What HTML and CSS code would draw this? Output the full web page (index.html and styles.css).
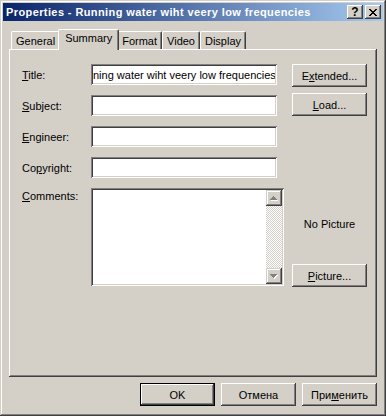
FILE: index.html
```html
<!DOCTYPE html>
<html lang="en">
<head>
    <meta charset="UTF-8">
    <title>Properties</title>
    <link rel="stylesheet" href="styles.css">
</head>
<body>

<div class="window">
    <!-- Caption -->
    <div class="titlebar">
        <span class="title">Properties - Running water wiht veery low frequencies</span>
        <div class="caption-buttons">
            <span class="cap-btn help">?</span>
            <span class="cap-btn close">
                <svg width="8" height="7" viewBox="0 0 8 7" shape-rendering="crispEdges">
                    <path d="M0 0h2v1h-2zM6 0h2v1h-2zM1 1h2v1h-2zM5 1h2v1h-2zM2 2h4v1h-4zM3 3h2v1h-2zM2 4h4v1h-4zM1 5h2v1h-2zM5 5h2v1h-2zM0 6h2v1h-2zM6 6h2v1h-2z" fill="#000"/>
                </svg>
            </span>
        </div>
    </div>

    <div class="content">
        <!-- Tabs -->
        <div class="tabs">
            <div class="tab">General</div>
            <div class="tab active">Summary</div>
            <div class="tab">Format</div>
            <div class="tab">Video</div>
            <div class="tab">Display</div>
        </div>

        <div class="panel">
            <div class="fields">
                <label class="field-label"><u>T</u>itle:</label>
                <input class="edit" type="text" value="ning water wiht veery low frequencies">

                <label class="field-label"><u>S</u>ubject:</label>
                <input class="edit" type="text">

                <label class="field-label"><u>E</u>ngineer:</label>
                <input class="edit" type="text">

                <label class="field-label">Co<u>p</u>yright:</label>
                <input class="edit" type="text">

                <label class="field-label top"><u>C</u>omments:</label>
                <div class="memo">
                    <div class="memo-text"></div>
                    <div class="scrollbar">
                        <div class="scroll-btn">
                            <svg width="8" height="5" viewBox="0 0 8 5" shape-rendering="crispEdges">
                                <path d="M4 1h1v1h-1zM3 2h3v1h-3zM2 3h5v1h-5zM1 4h7v1h-7z" fill="#fff"/>
                                <path d="M3 0h1v1h-1zM2 1h3v1h-3zM1 2h5v1h-5zM0 3h7v1h-7z" fill="#808080"/>
                            </svg>
                        </div>
                        <div class="scroll-track"></div>
                        <div class="scroll-btn">
                            <svg width="8" height="5" viewBox="0 0 8 5" shape-rendering="crispEdges">
                                <path d="M1 1h7v1h-7zM2 2h5v1h-5zM3 3h3v1h-3zM4 4h1v1h-1z" fill="#fff"/>
                                <path d="M0 0h7v1h-7zM1 1h5v1h-5zM2 2h3v1h-3zM3 3h1v1h-1z" fill="#808080"/>
                            </svg>
                        </div>
                    </div>
                </div>
            </div>

            <div class="side">
                <button class="btn">E<u>x</u>tended...</button>
                <button class="btn load"><u>L</u>oad...</button>
                <div class="no-picture">No Picture</div>
                <button class="btn picture"><u>P</u>icture...</button>
            </div>
        </div>

        <!-- Dialog buttons -->
        <div class="actions">
            <button class="btn default">OK</button>
            <button class="btn">Отмена</button>
            <button class="btn">При<u>м</u>енить</button>
        </div>
    </div>
</div>

</body>
</html>
```

FILE: styles.css
```css
/* General styling */
body {
    margin: 0;
    background-color: #d4d0c8;
    font-family: 'Liberation Sans', Arial, sans-serif;
    font-size: 11px;
    color: #000;
}

u {
    text-decoration: underline;
    text-underline-offset: 1px;
}

/* Window frame */
.window {
    width: 386px;
    height: 416px;
    box-sizing: border-box;
    padding: 3px;
    background-color: #d4d0c8;
    box-shadow: inset -1px -1px #404040, inset 1px 1px #d4d0c8,
                inset -2px -2px #808080, inset 2px 2px #fff;
}

/* Caption */
.titlebar {
    height: 18px;
    display: flex;
    align-items: center;
    padding: 0 2px 0 3px;
    background: linear-gradient(to right, #0a246a, #a6caf0);
}

.title {
    flex: 1;
    color: #fff;
    font-weight: bold;
    font-size: 11px;
    letter-spacing: 0.4px;
    white-space: nowrap;
    overflow: hidden;
}

.caption-buttons {
    display: flex;
    gap: 2px;
}

.cap-btn {
    width: 16px;
    height: 14px;
    box-sizing: border-box;
    display: flex;
    align-items: center;
    justify-content: center;
    background-color: #d4d0c8;
    box-shadow: inset -1px -1px #404040, inset 1px 1px #fff,
                inset -2px -2px #808080, inset 2px 2px #d4d0c8;
}

.help {
    font-weight: bold;
    font-size: 12px;
    line-height: 14px;
}

/* Tabs */
.content {
    padding: 0 6px;
}

.tabs {
    display: flex;
    align-items: flex-end;
    height: 20px;
    margin-top: 8px;
    padding-left: 2px;
}

.tab {
    height: 18px;
    box-sizing: border-box;
    padding: 1px 4px 0;
    line-height: 16px;
    border-left: 1px solid #fff;
    border-top: 1px solid #fff;
    border-right: 1px solid #404040;
    border-top-left-radius: 2px;
    border-top-right-radius: 2px;
    box-shadow: inset -1px 0 #808080;
    background-color: #d4d0c8;
    white-space: nowrap;
}

.tab.active {
    position: relative;
    z-index: 1;
    height: 21px;
    margin: 0 -2px -1px;
    padding: 0 6px;
    line-height: 17px;
}

/* Property page */
.panel {
    height: 328px;
    box-sizing: border-box;
    display: flex;
    align-items: flex-start;
    padding: 15px 0 0 13px;
    box-shadow: inset -1px -1px #404040, inset 1px 1px #fff,
                inset -2px -2px #808080;
}

.fields {
    display: grid;
    grid-template-columns: 69px auto;
    row-gap: 10px;
    align-items: center;
}

.field-label {
    white-space: nowrap;
}

.field-label.top {
    align-self: start;
    padding-top: 2px;
}

.edit {
    width: 186px;
    height: 21px;
    box-sizing: border-box;
    margin: 0;
    padding: 0 2px;
    border: none;
    outline: none;
    background-color: #fff;
    font-family: inherit;
    font-size: 11px;
    color: #000;
    box-shadow: inset 1px 1px #808080, inset -1px -1px #fff,
                inset 2px 2px #404040, inset -2px -2px #d4d0c8;
}

.memo {
    width: 193px;
    height: 98px;
    box-sizing: border-box;
    padding: 2px;
    display: flex;
    background-color: #fff;
    box-shadow: inset 1px 1px #808080, inset -1px -1px #fff,
                inset 2px 2px #404040, inset -2px -2px #d4d0c8;
}

.memo-text {
    flex: 1;
}

.scrollbar {
    width: 16px;
    display: flex;
    flex-direction: column;
}

.scroll-btn {
    height: 16px;
    display: flex;
    align-items: center;
    justify-content: center;
    background-color: #d4d0c8;
    box-shadow: inset -1px -1px #404040, inset 1px 1px #d4d0c8,
                inset -2px -2px #808080, inset 2px 2px #fff;
}

.scroll-track {
    flex: 1;
    background: repeating-conic-gradient(#fff 0 25%, #d4d0c8 0 50%) 0 0 / 2px 2px;
}

/* Right column */
.side {
    width: 75px;
    margin-left: 8px;
    display: flex;
    flex-direction: column;
}

.btn {
    width: 75px;
    height: 23px;
    box-sizing: border-box;
    margin: 0;
    padding: 0;
    border: none;
    background-color: #d4d0c8;
    font-family: inherit;
    font-size: 11px;
    color: #000;
    box-shadow: inset -1px -1px #404040, inset 1px 1px #fff,
                inset -2px -2px #808080, inset 2px 2px #d4d0c8;
}

.btn.load {
    margin-top: 6px;
}

.no-picture {
    margin-top: 101px;
    line-height: 14px;
    text-align: center;
}

.btn.picture {
    margin-top: 33px;
}

.btn.default {
    border: 1px solid #000;
}

/* Dialog buttons */
.actions {
    display: flex;
    justify-content: flex-end;
    gap: 6px;
    margin-top: 6px;
}
```
